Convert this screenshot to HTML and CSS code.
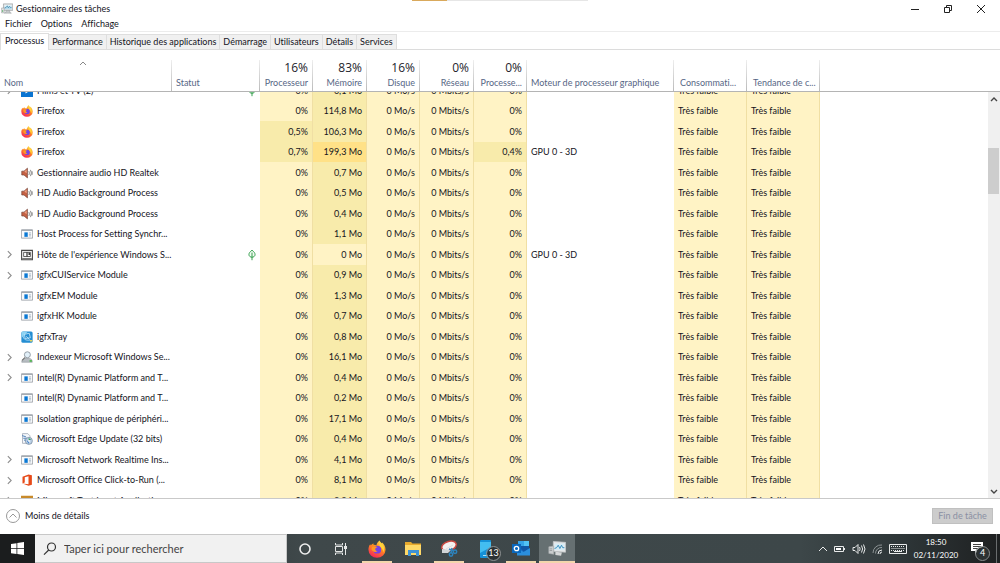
FILE: index.html
```html
<!DOCTYPE html>
<html lang="fr">
<head>
<meta charset="utf-8">
<title>Gestionnaire des tâches</title>
<link rel="stylesheet" href="styles.css">
</head>
<body>
<svg class="defs" aria-hidden="true">
  <defs>
    <linearGradient id="fire" x1="0.8" y1="0" x2="0.3" y2="1"><stop offset="0" stop-color="#ffe14a"/><stop offset="0.45" stop-color="#ff8a1f"/><stop offset="1" stop-color="#f5225c"/></linearGradient>
    <linearGradient id="screen" x1="0" y1="0" x2="0" y2="1"><stop offset="0" stop-color="#e9f6fb"/><stop offset="1" stop-color="#a9d5ea"/></linearGradient>
  </defs>
  <symbol id="firefox" viewBox="0 0 16 16">
    <path fill="url(#fire)" d="M10.4 0.4c.3 1.300.9 2 1.900 2.800.1-.5 0-.8 0-1.200 2 1.600 3.300 4 3.300 6.600a7.600 7.200 0 0 1-15.200 0c0-2 .5-3.700 1.600-4.900l.5 1.200c.6-1 1.500-1.500 2.500-1.800l-.2 1.200c1.200-.1 2 .1 2.700.5.200-1.700 1.200-3.500 2.900-4.400z"/>
    <circle cx="8.200" cy="8.600" r="3.500" fill="#7542e5"/>
    <path fill="#ff9a22" d="M3.500 6.300c1.800-1.200 3.600-.9 4.900.2-.9.200-1.500.6-2 1.200 0 1.400.8 2.200 2.100 2.300-1.900 1.500-5 .4-5.400-1.900z"/>
    <path fill="#ffd43c" d="M12.300 3.200c2.200 2.200 2.700 5.200 1.200 8 0-2.900-1.300-3.700-2.600-5.400-1-1.300-1.100-3-.5-5.400.3 1.300.9 2 1.900 2.800z"/>
  </symbol>
  <symbol id="speaker" viewBox="0 0 16 16">
    <path fill="#c56245" stroke="#68362a" stroke-width=".8" d="M1 5.500h3L8.600 1.500v13L4 10.700H1z"/>
    <path fill="#efa283" d="M4.500 6l3-2.600v5z"/>
    <path fill="none" stroke="#777" stroke-width="1.100" d="M10.500 5.500q1.400 2.600 0 5.200M12.600 3.800q2.500 4.200 0 8.400M14.600 5.500q.9 2.600 0 5.200"/>
  </symbol>
  <symbol id="app" viewBox="0 0 16 16">
    <path fill="#fafbfc" stroke="#8b9299" d="M.5 2.500h15v11H.5z"/>
    <path fill="#a6acb2" d="M1 2h14v2H1z"/>
    <path fill="#0a78d4" d="M4.500 5.800H9v6H4.500z"/>
    <path stroke="#9aaab8" d="M10.500 6.500h3M10.500 8.500h3M10.500 10.500h3"/>
  </symbol>
  <symbol id="host" viewBox="0 0 16 16">
    <path fill="#f4f4f4" stroke="#444" stroke-width="1.400" d="M.8 1.800h14.400v12.400H.8z"/>
    <path fill="#777" d="M1.500 12h13v1.500h-13z"/>
    <path fill="#fff" stroke="#333" d="M3.500 4.500h4.500v5.500H3.500zM8 4.500h4.500v5.500H8z"/>
    <path fill="#333" d="M10 5h2v3h-2z"/>
  </symbol>
  <symbol id="tray" viewBox="0 0 16 16">
    <rect x=".5" y=".5" width="15" height="15" rx="2" fill="#258ed2"/>
    <path fill="#8dd4f4" d="M1 1h8L1 9z"/>
    <path fill="none" stroke="#c3e7fa" stroke-width="1.100" d="M4.500 4.500l6.500-1.500 1.500 6-7 1zM3 7c0 4 4 6 9 5M7 7l4 4"/>
    <path fill="#e8d55a" d="M12 12h3v2h-3z"/>
  </symbol>
  <symbol id="indexer" viewBox="0 0 16 16">
    <path fill="#b7bdc2" stroke="#858c92" stroke-width=".7" d="M1 15c0-3.500 2-5 4-5h6c2.500 0 4 1.500 4 5z"/>
    <path stroke="#777" stroke-width="1.600" d="M5.500 8.500L1.500 12.500"/>
    <circle cx="8.500" cy="5" r="4" fill="#e1eff8" stroke="#8d969e" stroke-width="1.200"/>
    <path fill="#57b857" d="M11.500 12h3v2.500h-3z"/>
  </symbol>
  <symbol id="edgeup" viewBox="0 0 16 16">
    <path fill="#f3f6fa" stroke="#8791a0" stroke-width=".8" d="M2 .8h7l3 3v10H2z"/>
    <path fill="none" stroke="#4c7eb9" stroke-width="1.300" d="M1.500 3.500l5 1.500M3 7h5M4 9.500h3"/>
    <circle cx="10.500" cy="10.500" r="4.700" fill="#bdd1e6" stroke="#65788e" stroke-width=".8"/>
    <path fill="#3aa05a" d="M10 6.500l3.500 2-3 1.500z"/>
    <path fill="#3479c9" d="M7.500 10l3 1v3.500z"/>
    <circle cx="10.700" cy="10.600" r="1.200" fill="#fff"/>
  </symbol>
  <symbol id="office" viewBox="0 0 16 16">
    <path fill="#e64a19" fill-rule="evenodd" d="M2 3.500L10 .5l4.500 1.200v12.600l-4.500 1.200-8-2.700 8 .8V3L5 4.400v6.900l-3 1.500z"/>
  </symbol>
  <symbol id="films" viewBox="0 0 16 16">
    <path fill="#0a74d1" d="M0 0h16v16H0z"/><path fill="#fff" d="M6 5l5 3.200-5 3.200z"/>
  </symbol>
  <symbol id="teams" viewBox="0 0 16 16"><path fill="#c88a2a" d="M0 1h16v15H0z"/></symbol>
  <symbol id="leaf" viewBox="0 0 10 14">
    <path fill="#f2fbf3" stroke="#2f9c48" stroke-width="1.200" d="M5 1C2.500 3 1.200 4.500 1.200 6.500S3 9.800 5 9.800s3.800-1.300 3.800-3.300S7.500 3 5 1zM5 4v9.500"/>
  </symbol>
  <symbol id="chev" viewBox="0 0 6 10"><path fill="none" stroke="#8c8c8c" stroke-width="1.300" d="M1 1l4 4-4 4"/></symbol>
  <symbol id="taskmgr" viewBox="0 0 22 20">
    <path fill="#e1e3e4" stroke="#858b8f" d="M4.500 1.500h17v12h-17z"/>
    <path fill="url(#screen)" d="M6.500 3.500h13v8h-13z"/>
    <path fill="none" stroke="#287da4" stroke-width="1.200" d="M6.500 9l3-1 2-3 2 4 2-3 1.500 2h2.500"/>
    <path fill="#c9cdcf" stroke="#8b9093" stroke-width=".8" d="M9 14h7v3l3 1.500H6L9 17z"/>
    <path fill="#dfe2e3" stroke="#8b9093" stroke-width=".8" d="M1 9h5v9H1z"/>
    <path fill="#55ae65" d="M2 13h2v3H2z"/>
  </symbol>
  <symbol id="taskmgr-large" viewBox="0 0 22 20">
    <path fill="#e6e7e8" stroke="#c3c6c8" d="M6.500 1.500l15 1v12l-15-1z"/>
    <path fill="#d5ecf6" d="M8 4h12v8H8z"/>
    <path fill="none" stroke="#3a8fbd" stroke-width="1.200" d="M8 10l2.500-1 2-3 2 4 2-4 1.500 3h2"/>
    <path fill="#d5d7d8" d="M9 14l8 1-1 4-7-1z"/>
    <path fill="#c9cccd" stroke="#a5a9ab" stroke-width=".8" d="M1 8l6-1v10l-6-1z"/>
    <path fill="#8e9395" d="M2 10h3v1H2zM2 12h3v1H2z"/>
  </symbol>
</svg>

<main class="window">
  <header class="titlebar">
    <svg class="logo"><use href="#taskmgr"/></svg>
    <h1 class="title">Gestionnaire des tâches</h1>
    <span class="progress"><i class="progress-done"></i></span>
    <div class="controls">
      <button aria-label="Réduire"><svg width="10" height="10"><path d="M1 5.500h8"/></svg></button>
      <button aria-label="Restaurer"><svg width="10" height="10"><path d="M1.500 3.500h5v5h-5zM3.500 3V1.500h5v5H7"/></svg></button>
      <button aria-label="Fermer"><svg width="10" height="10"><path d="M1 1l8 8M9 1L1 9"/></svg></button>
    </div>
  </header>
  <nav class="menu"><button>Fichier</button><button>Options</button><button>Affichage</button></nav>
  <div class="tabs" role="tablist">
    <button class="tab selected" role="tab" aria-selected="true">Processus</button>
    <button class="tab" role="tab">Performance</button>
    <button class="tab" role="tab">Historique des applications</button>
    <button class="tab" role="tab">Démarrage</button>
    <button class="tab" role="tab">Utilisateurs</button>
    <button class="tab" role="tab">Détails</button>
    <button class="tab" role="tab">Services</button>
  </div>

  <table class="grid head">
    <colgroup><col class="c-name"><col class="c-status"><col class="c-odd"><col class="c-even"><col class="c-odd"><col class="c-even"><col class="c-odd"><col class="c-engine"><col class="c-power"><col class="c-power"><col></colgroup>
    <thead><tr>
      <th class="left"><svg class="sort" width="8" height="5"><path d="M1 4l3-3 3 3"/></svg>Nom</th>
      <th class="left">Statut</th>
      <th><b>16%</b>Processeur</th>
      <th><b>83%</b>Mémoire</th>
      <th><b>16%</b>Disque</th>
      <th><b>0%</b>Réseau</th>
      <th><b>0%</b>Processe...</th>
      <th class="left">Moteur de processeur graphique</th>
      <th class="left wide">Consommati...</th>
      <th class="left wide">Tendance de c...</th>
      <th class="rest"></th>
    </tr></thead>
  </table>

  <div class="list">
    <div class="viewport">
      <table class="grid body">
        <colgroup><col class="c-name"><col class="c-status"><col class="c-odd"><col class="c-even"><col class="c-odd"><col class="c-even"><col class="c-odd"><col class="c-engine"><col class="c-power"><col class="c-power"><col></colgroup>
        <tbody>
        <tr><td><div class="proc"><svg class="chev"><use href="#chev"/></svg><svg class="ico"><use href="#films"/></svg>Films et TV (2)</div><td class="status"><svg class="leaf"><use href="#leaf"/></svg><td class="h1">0%<td class="h2">0,1 Mo<td class="h1">0 Mo/s<td class="h1">0 Mbits/s<td class="h1">0%<td><td class="h1">Très faible<td class="h1">Très faible<td></tr>
        <tr><td><div class="proc"><svg class="chev"></svg><svg class="ico"><use href="#firefox"/></svg>Firefox</div><td><td class="h1">0%<td class="h2">114,8 Mo<td class="h1">0 Mo/s<td class="h1">0 Mbits/s<td class="h1">0%<td><td class="h1">Très faible<td class="h1">Très faible<td></tr>
        <tr><td><div class="proc"><svg class="chev"></svg><svg class="ico"><use href="#firefox"/></svg>Firefox</div><td><td class="h2">0,5%<td class="h2">106,3 Mo<td class="h1">0 Mo/s<td class="h1">0 Mbits/s<td class="h1">0%<td><td class="h1">Très faible<td class="h1">Très faible<td></tr>
        <tr><td><div class="proc"><svg class="chev"></svg><svg class="ico"><use href="#firefox"/></svg>Firefox</div><td><td class="h2">0,7%<td class="h3">199,3 Mo<td class="h1">0 Mo/s<td class="h1">0 Mbits/s<td class="h2">0,4%<td>GPU 0 - 3D<td class="h1">Très faible<td class="h1">Très faible<td></tr>
        <tr><td><div class="proc"><svg class="chev"></svg><svg class="ico"><use href="#speaker"/></svg>Gestionnaire audio HD Realtek</div><td><td class="h1">0%<td class="h2">0,7 Mo<td class="h1">0 Mo/s<td class="h1">0 Mbits/s<td class="h1">0%<td><td class="h1">Très faible<td class="h1">Très faible<td></tr>
        <tr><td><div class="proc"><svg class="chev"></svg><svg class="ico"><use href="#speaker"/></svg>HD Audio Background Process</div><td><td class="h1">0%<td class="h2">0,5 Mo<td class="h1">0 Mo/s<td class="h1">0 Mbits/s<td class="h1">0%<td><td class="h1">Très faible<td class="h1">Très faible<td></tr>
        <tr><td><div class="proc"><svg class="chev"></svg><svg class="ico"><use href="#speaker"/></svg>HD Audio Background Process</div><td><td class="h1">0%<td class="h2">0,4 Mo<td class="h1">0 Mo/s<td class="h1">0 Mbits/s<td class="h1">0%<td><td class="h1">Très faible<td class="h1">Très faible<td></tr>
        <tr><td><div class="proc"><svg class="chev"></svg><svg class="ico"><use href="#app"/></svg>Host Process for Setting Synchr...</div><td><td class="h1">0%<td class="h2">1,1 Mo<td class="h1">0 Mo/s<td class="h1">0 Mbits/s<td class="h1">0%<td><td class="h1">Très faible<td class="h1">Très faible<td></tr>
        <tr><td><div class="proc"><svg class="chev"><use href="#chev"/></svg><svg class="ico"><use href="#host"/></svg>Hôte de l'expérience Windows S...</div><td class="status"><svg class="leaf"><use href="#leaf"/></svg><td class="h1">0%<td class="h1">0 Mo<td class="h1">0 Mo/s<td class="h1">0 Mbits/s<td class="h1">0%<td>GPU 0 - 3D<td class="h1">Très faible<td class="h1">Très faible<td></tr>
        <tr><td><div class="proc"><svg class="chev"><use href="#chev"/></svg><svg class="ico"><use href="#app"/></svg>igfxCUIService Module</div><td><td class="h1">0%<td class="h2">0,9 Mo<td class="h1">0 Mo/s<td class="h1">0 Mbits/s<td class="h1">0%<td><td class="h1">Très faible<td class="h1">Très faible<td></tr>
        <tr><td><div class="proc"><svg class="chev"></svg><svg class="ico"><use href="#app"/></svg>igfxEM Module</div><td><td class="h1">0%<td class="h2">1,3 Mo<td class="h1">0 Mo/s<td class="h1">0 Mbits/s<td class="h1">0%<td><td class="h1">Très faible<td class="h1">Très faible<td></tr>
        <tr><td><div class="proc"><svg class="chev"></svg><svg class="ico"><use href="#app"/></svg>igfxHK Module</div><td><td class="h1">0%<td class="h2">0,7 Mo<td class="h1">0 Mo/s<td class="h1">0 Mbits/s<td class="h1">0%<td><td class="h1">Très faible<td class="h1">Très faible<td></tr>
        <tr><td><div class="proc"><svg class="chev"></svg><svg class="ico"><use href="#tray"/></svg>igfxTray</div><td><td class="h1">0%<td class="h2">0,8 Mo<td class="h1">0 Mo/s<td class="h1">0 Mbits/s<td class="h1">0%<td><td class="h1">Très faible<td class="h1">Très faible<td></tr>
        <tr><td><div class="proc"><svg class="chev"><use href="#chev"/></svg><svg class="ico"><use href="#indexer"/></svg>Indexeur Microsoft Windows Se...</div><td><td class="h1">0%<td class="h2">16,1 Mo<td class="h1">0 Mo/s<td class="h1">0 Mbits/s<td class="h1">0%<td><td class="h1">Très faible<td class="h1">Très faible<td></tr>
        <tr><td><div class="proc"><svg class="chev"><use href="#chev"/></svg><svg class="ico"><use href="#app"/></svg>Intel(R) Dynamic Platform and T...</div><td><td class="h1">0%<td class="h2">0,4 Mo<td class="h1">0 Mo/s<td class="h1">0 Mbits/s<td class="h1">0%<td><td class="h1">Très faible<td class="h1">Très faible<td></tr>
        <tr><td><div class="proc"><svg class="chev"></svg><svg class="ico"><use href="#app"/></svg>Intel(R) Dynamic Platform and T...</div><td><td class="h1">0%<td class="h2">0,2 Mo<td class="h1">0 Mo/s<td class="h1">0 Mbits/s<td class="h1">0%<td><td class="h1">Très faible<td class="h1">Très faible<td></tr>
        <tr><td><div class="proc"><svg class="chev"></svg><svg class="ico"><use href="#app"/></svg>Isolation graphique de périphéri...</div><td><td class="h1">0%<td class="h2">17,1 Mo<td class="h1">0 Mo/s<td class="h1">0 Mbits/s<td class="h1">0%<td><td class="h1">Très faible<td class="h1">Très faible<td></tr>
        <tr><td><div class="proc"><svg class="chev"></svg><svg class="ico"><use href="#edgeup"/></svg>Microsoft Edge Update (32 bits)</div><td><td class="h1">0%<td class="h2">0,4 Mo<td class="h1">0 Mo/s<td class="h1">0 Mbits/s<td class="h1">0%<td><td class="h1">Très faible<td class="h1">Très faible<td></tr>
        <tr><td><div class="proc"><svg class="chev"><use href="#chev"/></svg><svg class="ico"><use href="#app"/></svg>Microsoft Network Realtime Ins...</div><td><td class="h1">0%<td class="h2">4,1 Mo<td class="h1">0 Mo/s<td class="h1">0 Mbits/s<td class="h1">0%<td><td class="h1">Très faible<td class="h1">Très faible<td></tr>
        <tr><td><div class="proc"><svg class="chev"><use href="#chev"/></svg><svg class="ico"><use href="#office"/></svg>Microsoft Office Click-to-Run (...</div><td><td class="h1">0%<td class="h2">8,1 Mo<td class="h1">0 Mo/s<td class="h1">0 Mbits/s<td class="h1">0%<td><td class="h1">Très faible<td class="h1">Très faible<td></tr>
        <tr><td><div class="proc"><svg class="chev"><use href="#chev"/></svg><svg class="ico"><use href="#teams"/></svg>Microsoft Text Input Application</div><td><td class="h1">0%<td class="h2">3,3 Mo<td class="h1">0 Mo/s<td class="h1">0 Mbits/s<td class="h1">0%<td><td class="h1">Très faible<td class="h1">Très faible<td></tr>
        </tbody>
      </table>
    </div>
    <div class="scroll">
      <button aria-label="Monter"><svg width="8" height="6"><path d="M1 5l3-3 3 3"/></svg></button>
      <div class="track"><div class="thumb"></div></div>
      <button aria-label="Descendre"><svg width="8" height="6"><path d="M1 1l3 3 3-3"/></svg></button>
    </div>
  </div>

  <footer class="footer">
    <button class="less"><svg width="14" height="14"><circle cx="7" cy="7" r="6.500"/><path d="M3.500 8.500L7 5l3.500 3.500"/></svg>Moins de détails</button>
    <button class="end" disabled>Fin de tâche</button>
  </footer>
</main>

<div class="taskbar">
  <button class="start" aria-label="Démarrer"><svg width="13" height="13" viewBox="0 0 13 13"><path fill="#fff" d="M0 2l5.500-.8v5H0zM6.300 1.100L13 0v6.200H6.300zM0 7h5.500v5L0 11.200zM6.300 7H13v6l-6.700-1z"/></svg></button>
  <label class="search"><svg width="14" height="14"><circle cx="8.500" cy="5" r="4"/><path d="M5.700 8L1 12.700"/></svg><input type="text" aria-label="Rechercher" placeholder="Taper ici pour rechercher"></label>
  <div class="apps">
    <button aria-label="Cortana"><svg width="14" height="14"><circle cx="7" cy="7" r="5" fill="none" stroke="#eee" stroke-width="1.600"/></svg></button>
    <button aria-label="Vue des tâches"><svg width="14" height="14"><path fill="none" stroke="#e4e6e6" d="M1.500 1v2h7V1M1.500 4.500h7v5h-7zM1.500 13v-2h7v2M11.500 1v12"/><path fill="#e4e6e6" d="M10 4h3v3h-3z"/></svg></button>
    <button class="open" aria-label="Firefox"><svg width="18" height="18"><use href="#firefox"/></svg></button>
    <button aria-label="Explorateur"><svg width="18" height="16"><path fill="#e7a92d" d="M1 1h6l1.500 1.500H17V14H1z"/><path fill="#ffd968" d="M1 4h16v10H1z"/><path fill="#3f92d4" d="M4 9h11v6h-3v-3H7v3H4z"/></svg></button>
    <button class="open" aria-label="Capture"><svg width="18" height="18"><ellipse cx="9" cy="6" rx="7.500" ry="4.500" transform="rotate(-18 9 6)" fill="#f5f1f0" stroke="#c84841" stroke-width="1.500"/><path fill="#d2d5d7" d="M2 9l9 1-3 3H2z"/><path fill="none" stroke="#ddd" d="M6 9l7-4"/><g fill="none" stroke="#2d83bd" stroke-width="1.500"><path d="M9 9l5 2M11 13l1-5"/><circle cx="11" cy="14.500" r="1.700"/><circle cx="15" cy="11.700" r="1.700"/></g></svg></button>
    <button class="phone" aria-label="Téléphone, 13 notifications"><svg width="12" height="18"><rect x="1" width="11" height="18" rx="1" fill="#1591d8"/><path fill="#43bdf0" d="M1 2h11v5L1 13z"/><path stroke="#a8e2fb" d="M4 15.500h5"/></svg><span class="badge">13</span></button>
    <button class="open" aria-label="Outlook"><svg width="18" height="17"><path fill="#1a6fc4" d="M6 1h11v12H6z"/><path fill="#35a4e8" d="M6 1h6v5H6z"/><path fill="#51c2f5" d="M12 1h5v5h-5z"/><path fill="#1057a7" d="M6 6h11v3l-5 3z"/><path fill="#2b8edc" d="M5 15.500V8l6.500 4L18 8v7.500z"/><path fill="#0a68bd" d="M0 4h9v9H0z"/><circle cx="4.500" cy="8.500" r="2.200" fill="none" stroke="#fff" stroke-width="1.300"/></svg></button>
    <button class="open active" aria-label="Gestionnaire des tâches"><svg width="18" height="17"><use href="#taskmgr-large"/></svg></button>
  </div>
  <div class="tray">
    <svg width="10" height="8"><path d="M1 6l4-4 4 4"/></svg>
    <svg width="12" height="8"><path d="M.5 1.500h9v5h-9zM10.500 3v2"/><path fill="#fff" stroke="none" d="M2 3h5v2H2z"/></svg>
    <svg width="14" height="12"><path d="M1 4.500h2l3-3v9l-3-3H1zM7.500 4q1.300 2 0 4M9.500 2.500q2.200 3.500 0 7M11.500 1.500q3 4.500 0 9"/></svg>
    <svg width="11" height="12"><path stroke="#8c9293" d="M1 10a8 8 0 0 1 9-8M3.500 10.500a6 6 0 0 1 6.500-6"/><path d="M6 11a4 4 0 0 1 4-4M8 11a2 2 0 0 1 2-2"/></svg>
    <svg width="18" height="11"><path d="M.5 1.500h17v9H.5z"/><path stroke-dasharray="1 1" d="M2 3.500h14M2.500 5.500h14M2 7.500h14"/><path d="M5 8.500h8"/></svg>
  </div>
  <div class="clock"><span>18:50</span><span>02/11/2020</span></div>
  <button class="notif" aria-label="4 notifications"><svg width="13" height="13"><path fill="#fff" d="M0 0h12v9H7l-3 3V9H0z"/><path stroke="#444" d="M2 2.500h8M2 4.500h8M2 6.500h5"/></svg><span class="badge">4</span></button>
  <span class="desktop"></span>
</div>
</body>
</html>
```
FILE: styles.css
```css
* { box-sizing: border-box; }

body {
  margin: 0;
  height: 100vh;
  display: flex;
  flex-direction: column;
  overflow: hidden;
  background: #fff;
  color: #14141c;
  font: 9px/12px Lato, "Open Sans", sans-serif;
  font-variant-ligatures: none;
}

button {
  margin: 0;
  padding: 0;
  border: 0;
  background: none;
  color: inherit;
  font: inherit;
  font-variant-ligatures: none;
}

svg { display: block; flex: none; }
.defs { position: absolute; width: 0; height: 0; }

.window {
  flex: 1;
  min-height: 0;
  display: flex;
  flex-direction: column;
}

/* Title bar, menu and tabs */
.titlebar {
  height: 17px;
  display: flex;
  align-items: center;
  padding: 0 3px 0 1px;
  position: relative;
}
.logo { width: 12px; height: 11px; margin-right: 3px; }
.title { margin: 0; font-size: 9px; font-weight: 400; }
.progress {
  position: absolute;
  top: 0;
  left: 412px;
  width: 176px;
  height: 1px;
  background: #e6e6e6;
}
.progress-done { display: block; width: 20%; height: 1px; background: #d9a95c; }
.controls { margin-left: auto; display: flex; }
.controls button {
  width: 33px;
  height: 16px;
  display: flex;
  align-items: center;
  justify-content: center;
}
.controls svg { fill: none; stroke: #222; }

.menu {
  height: 14px;
  display: flex;
  align-items: center;
  gap: 9px;
  padding-left: 5px;
}

.tabs {
  height: 19px;
  display: flex;
  align-items: flex-end;
  border-top: 1px solid #ececec;
  border-bottom: 1px solid #dcdcdc;
}
.tab {
  height: 15px;
  padding: 0 3px;
  background: #f0f0f0;
  border: 1px solid #dedede;
  border-width: 1px 1px 0 0;
}
.tab.selected {
  height: 17px;
  margin-bottom: -1px;
  padding: 0 4px 2px;
  background: #fff;
  border-left-width: 1px;
}

/* Process table */
.grid {
  width: 100%;
  table-layout: fixed;
  border-collapse: separate;
  border-spacing: 0;
}
.c-name { width: 172px; }
.c-status { width: 88px; }
.c-odd { width: 53px; }
.c-even { width: 54px; }
.c-engine { width: 147px; }
.c-power { width: 73px; }

th {
  height: 42px;
  padding: 0 5px 2px 0;
  vertical-align: bottom;
  text-align: right;
  font-weight: 400;
  color: #566685;
  white-space: nowrap;
  border-bottom: 1px solid #b4b4b4;
  background: linear-gradient(#eee, #bbb) right bottom / 1px 31px no-repeat;
}
th b {
  display: block;
  margin-bottom: 2px;
  font-family: "Open Sans", "Noto Sans", sans-serif;
  font-size: 12px;
  line-height: 14px;
  font-weight: 400;
  color: #23232b;
}
th.left { text-align: left; padding: 0 0 2px 4px; }
th.wide { padding-left: 6px; }
th.rest { background: none; }
.sort { margin: 0 0 11px 75px; fill: none; stroke: #888; }

.list {
  flex: 1;
  min-height: 0;
  display: flex;
  border-bottom: 1px solid #c9c9c9;
}
.viewport { flex: 1; overflow: hidden; }
.body { width: calc(100% + 12px); margin-top: -12px; }
.body tr { height: 20px; }
.body tr:nth-child(odd) { height: 21px; }
td {
  padding: 0 4px;
  text-align: right;
  white-space: nowrap;
}
td:nth-child(1) { padding: 0; text-align: left; }
td:nth-child(n+8) { text-align: left; }
.h1, .h2, .h3 { border-right: 1px solid #f0dfa4; }
.h1 { background: #fff3c5; }
.h2 { background: #f8ebab; }
.h3 { background: #ffe187; }
.proc { display: flex; align-items: center; }
.chev { width: 5px; height: 9px; margin: 0 9px 0 7px; }
.ico { width: 12px; height: 12px; margin-right: 4px; }
.leaf { width: 8px; height: 12px; margin-left: auto; }

.scroll {
  width: 12px;
  display: flex;
  flex-direction: column;
  background: #f0f0f0;
}
.scroll button {
  height: 13px;
  display: flex;
  align-items: center;
  justify-content: center;
}
.scroll svg { fill: none; stroke: #444; stroke-width: 1.4; }
.track { flex: 1; padding-top: 43px; }
.thumb { height: 46px; margin-right: 1px; background: #cdcdcd; }

.footer {
  height: 35px;
  display: flex;
  align-items: center;
  justify-content: space-between;
  padding: 0 7px 2px 6px;
}
.less { display: flex; align-items: center; gap: 5px; }
.less svg { fill: none; stroke: #999; }
.end {
  width: 61px;
  height: 16px;
  background: #ccc;
  border: 1px solid #c0c0c0;
  color: #8a8fa3;
}

/* Taskbar */
.taskbar {
  height: 29px;
  display: flex;
  background: linear-gradient(90deg, #181a1b 0, #3f484a 30%, #3d4749 80%, #2e3638 90%, #1e2021 100%);
  color: #fff;
}
.start {
  width: 35px;
  display: flex;
  align-items: center;
  justify-content: center;
  background: #1b1d1e;
}
.search {
  width: 252px;
  display: flex;
  align-items: center;
  gap: 7px;
  padding-left: 8px;
  background: #f1f1f1;
  border: 1px solid #c8c8c8;
  border-left: 0;
}
.search svg { fill: none; stroke: #333; stroke-width: 1.2; }
.search input {
  flex: 1;
  min-width: 0;
  padding: 0;
  border: 0;
  background: none;
  font: 11px/16px Lato, "Open Sans", sans-serif;
}
.search input::placeholder { color: #444; opacity: 1; }

.apps { display: flex; }
.apps button {
  width: 36px;
  display: flex;
  align-items: center;
  justify-content: center;
  position: relative;
}
.apps .active { background: #667072; }
.open::after {
  content: "";
  position: absolute;
  left: 3px;
  right: 3px;
  bottom: 0;
  height: 2px;
  background: #f3d6ac;
}
.open.active::after { left: 0; right: 0; }
.badge {
  position: absolute;
  left: 20px;
  bottom: 3px;
  width: 13px;
  height: 13px;
  border-radius: 50%;
  outline: 1px solid #8b8f90;
  background: #2c3233;
  font-size: 9px;
  line-height: 12px;
  text-align: center;
}

.tray {
  margin-left: auto;
  display: flex;
  align-items: center;
  gap: 6px;
}
.tray svg { fill: none; stroke: #e8eaea; }
.clock {
  width: 58px;
  display: flex;
  flex-direction: column;
  justify-content: center;
  text-align: center;
  font-size: 8px;
  line-height: 13px;
}
.notif { width: 31px; display: flex; align-items: center; padding-left: 6px; position: relative; }
.notif .badge { left: 11px; }
.desktop { width: 4px; border-left: 1px solid #6a6d6e; }
```
